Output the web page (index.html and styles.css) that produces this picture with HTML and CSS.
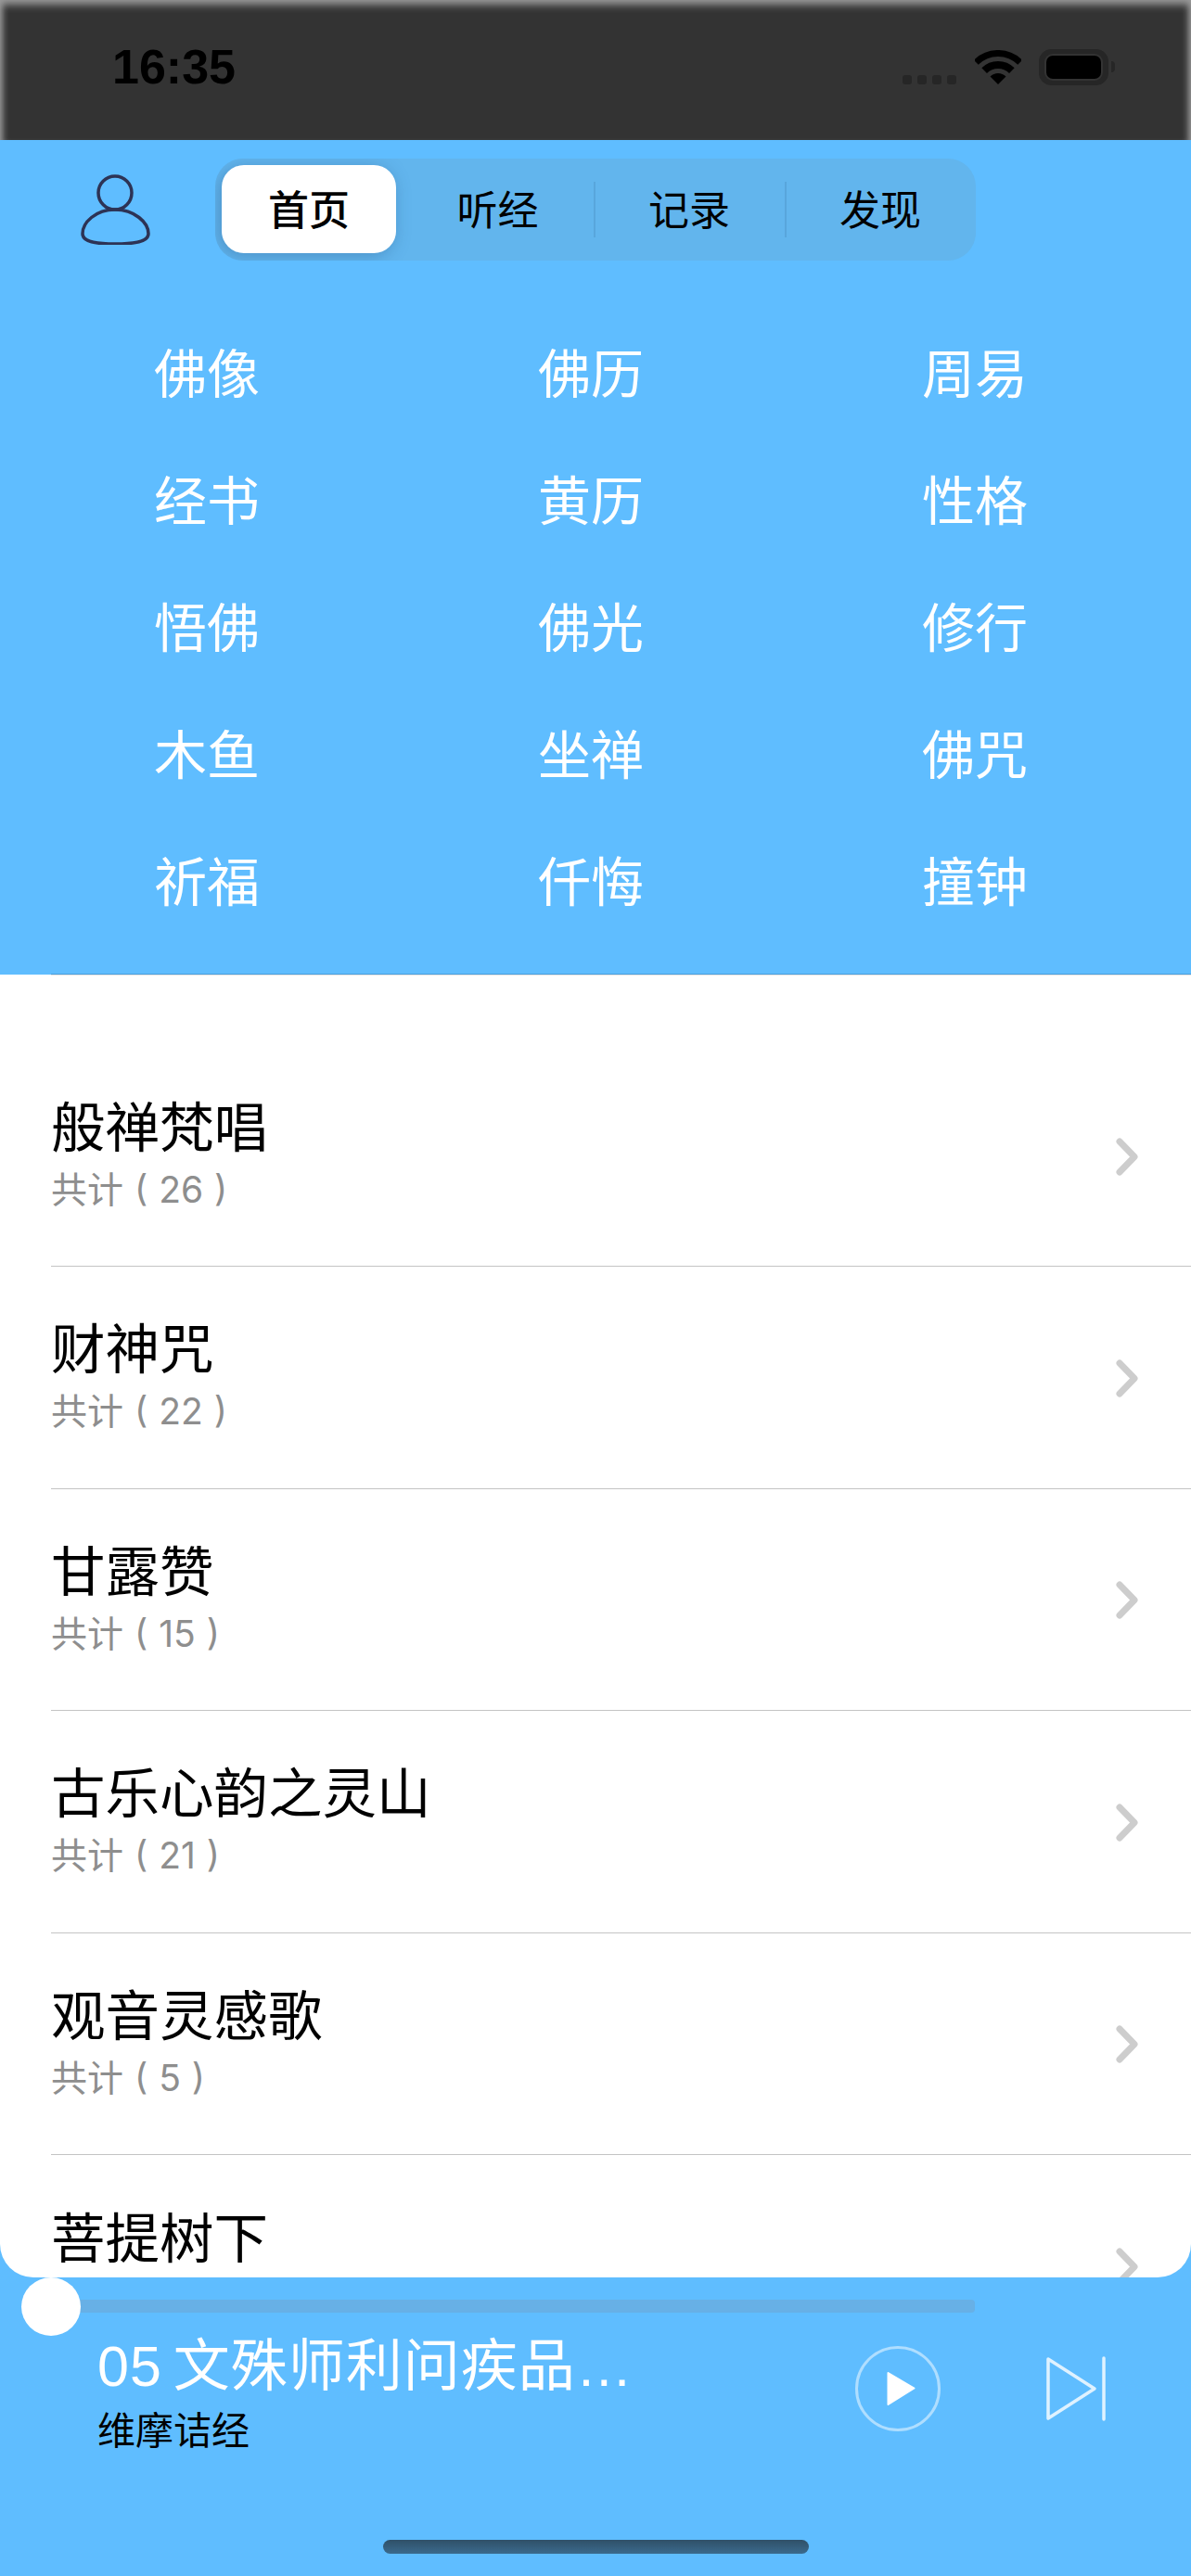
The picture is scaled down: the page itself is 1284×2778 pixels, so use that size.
FILE: index.html
```html
<!DOCTYPE html>
<html lang="zh">
<head>
<meta charset="utf-8">
<title>首页</title>
<link rel="stylesheet" href="styles.css">
</head>
<body>
<div class="phone">
  <header class="status">
    <span class="time">16:35</span>
    <div class="status-icons">
      <div class="signal"><i></i><i></i><i></i><i></i></div>
      <svg class="wifi" width="50" height="37" viewBox="0 0 50 37">
        <path d="M25 37 L16.5 28.5 A12 12 0 0 1 33.5 28.5 Z" fill="#000"/>
        <path d="M10.15 22.15 A21 21 0 0 1 39.85 22.15" fill="none" stroke="#000" stroke-width="8"/>
        <path d="M1.3 13.3 A33.5 33.5 0 0 1 48.7 13.3" fill="none" stroke="#000" stroke-width="7"/>
      </svg>
      <div class="battery"><div class="battery-fill"></div></div>
      <div class="battery-nub"></div>
    </div>
  </header>

  <section class="hero">
    <div class="topbar">
      <svg class="user" width="76" height="76" viewBox="0 0 76 76">
        <circle cx="37" cy="20" r="18" fill="none" stroke="#2d3355" stroke-width="3.5"/>
        <path d="M37 38 C16 38 2 52 2 64 C2 73 16 75 37 75 C58 75 73 73 73 64 C73 52 58 38 37 38 Z" fill="none" stroke="#2d3355" stroke-width="3.5"/>
      </svg>
      <nav class="seg">
        <a class="seg-item seg-active">首页</a>
        <a class="seg-item seg-second">听经</a>
        <a class="seg-item seg-rule">记录</a>
        <a class="seg-item seg-rule">发现</a>
      </nav>
    </div>
    <div class="grid">
      <a>佛像</a><a>佛历</a><a>周易</a>
      <a>经书</a><a>黄历</a><a>性格</a>
      <a>悟佛</a><a>佛光</a><a>修行</a>
      <a>木鱼</a><a>坐禅</a><a>佛咒</a>
      <a>祈福</a><a>仟悔</a><a>撞钟</a>
    </div>
    <div class="hero-rule"></div>
  </section>

  <main class="sheet">
    <div class="sheet-rule"></div>
    <div class="row">
      <div class="row-text"><div class="row-title">般禅梵唱</div><div class="row-sub">共计 ( 26 )</div></div>
      <svg class="chev" width="24" height="41" viewBox="0 0 24 41"><path d="M4 4 L20 20.5 L4 37"/></svg>
    </div>
    <div class="row">
      <div class="row-text"><div class="row-title">财神咒</div><div class="row-sub">共计 ( 22 )</div></div>
      <svg class="chev" width="24" height="41" viewBox="0 0 24 41"><path d="M4 4 L20 20.5 L4 37"/></svg>
    </div>
    <div class="row">
      <div class="row-text"><div class="row-title">甘露赞</div><div class="row-sub">共计 ( 15 )</div></div>
      <svg class="chev" width="24" height="41" viewBox="0 0 24 41"><path d="M4 4 L20 20.5 L4 37"/></svg>
    </div>
    <div class="row">
      <div class="row-text"><div class="row-title">古乐心韵之灵山</div><div class="row-sub">共计 ( 21 )</div></div>
      <svg class="chev" width="24" height="41" viewBox="0 0 24 41"><path d="M4 4 L20 20.5 L4 37"/></svg>
    </div>
    <div class="row">
      <div class="row-text"><div class="row-title">观音灵感歌</div><div class="row-sub">共计 ( 5 )</div></div>
      <svg class="chev" width="24" height="41" viewBox="0 0 24 41"><path d="M4 4 L20 20.5 L4 37"/></svg>
    </div>
    <div class="row row-cut">
      <div class="row-text"><div class="row-title">菩提树下</div></div>
      <svg class="chev" width="24" height="41" viewBox="0 0 24 41"><path d="M4 4 L20 20.5 L4 37"/></svg>
    </div>
  </main>

  <footer class="player">
    <div class="track"><div class="knob"></div></div>
    <div class="now">
      <div class="now-text">
        <div class="now-title">05 文殊师利问疾品…</div>
        <div class="now-sub">维摩诘经</div>
      </div>
      <svg class="play" width="92" height="92" viewBox="0 0 92 92">
        <circle cx="46" cy="46" r="44.5" fill="none" stroke="#fff" stroke-opacity="0.5" stroke-width="3"/>
        <path d="M35.5 29 L63.5 45.5 L35.5 63 Z" fill="#fff" stroke="#fff" stroke-width="2" stroke-linejoin="round"/>
      </svg>
      <svg class="next" width="66" height="70" viewBox="0 0 66 70">
        <path d="M2 3 L52 35 L2 67 Z" fill="none" stroke="#fff" stroke-opacity="0.8" stroke-width="3.5" stroke-linejoin="round"/>
        <path d="M62 2 V68" fill="none" stroke="#fff" stroke-opacity="0.8" stroke-width="3.5" stroke-linecap="round"/>
      </svg>
    </div>
    <div class="home-bar"></div>
  </footer>
</div>
</body>
</html>
```

FILE: styles.css
```css
* { box-sizing: border-box; }
html, body { margin: 0; padding: 0; }
body {
  background: #5fbdff;
  font-family: "Liberation Sans", "Noto Sans CJK SC", sans-serif;
}
.phone {
  width: 1284px;
  height: 2778px;
  display: flex;
  flex-direction: column;
  overflow: hidden;
  background: #5fbdff;
}

/* status bar */
.status {
  height: 151px;
  flex: none;
  background: #333;
  box-shadow: inset 0 10px 8px -5px #9a9a9a, inset 9px 0 7px -6px #9a9a9a, inset -9px 0 7px -6px #9a9a9a;
  display: flex;
  justify-content: space-between;
  align-items: flex-end;
  padding: 0 82px 59px 121px;
}
.time {
  font-size: 52px;
  line-height: 40px;
  font-weight: 700;
  color: #000;
}
.status-icons { display: flex; align-items: flex-end; }
.signal { display: flex; gap: 6px; margin-right: 20px; margin-bottom: 1px; }
.signal i { display: block; width: 10px; height: 10px; border-radius: 3px; background: #262626; }
.wifi { margin-right: 19px; margin-bottom: 1px; }
.battery {
  width: 75px;
  height: 39px;
  padding: 6px 7px;
  border-radius: 13px;
  border: 1px solid #262626;
  background: #262626;
}
.battery-fill { height: 100%; border-radius: 7px; background: #000; box-shadow: 0 0 0 2px #333; }
.battery-nub { width: 4px; height: 12px; margin: 0 0 14px 3px; border-radius: 0 6px 6px 0; background: #262626; }

/* blue header */
.hero { height: 900px; flex: none; padding-top: 20px; }
.topbar { display: flex; align-items: center; height: 110px; padding-left: 87px; }
.user { flex: none; margin-right: 69px; }
.seg {
  width: 820px;
  height: 110px;
  padding: 7px 0 8px 7px;
  display: flex;
  align-items: stretch;
  overflow: hidden;
  border-radius: 30px;
  background: #62b5ed;
}
.seg-item {
  display: flex;
  align-items: center;
  justify-content: center;
  position: relative;
  flex: none;
  width: 206px;
  padding-bottom: 4px;
  font-size: 44px;
  color: #000;
}
.seg-active {
  width: 188px;
  border-radius: 24px;
  background: #fff;
  box-shadow: -3px 3px 18px rgba(40, 90, 140, 0.4);
  font-weight: 500;
}
.seg-second { width: 213px; padding-left: 6px; }
.seg-rule::before {
  content: "";
  position: absolute;
  left: 0;
  top: 18px;
  bottom: 17px;
  width: 2px;
  background: #58a6dc;
}
.grid {
  margin: 49px 0 0 16px;
  width: 1242px;
  display: grid;
  grid-template-columns: repeat(3, 414px);
  grid-auto-rows: 137px;
}
.grid a {
  display: flex;
  align-items: center;
  justify-content: center;
  font-size: 57px;
  font-weight: 400;
  color: #fff;
}
.hero-rule { height: 1px; margin: 35px 0 0 55px; background: #4a9fdc; }

/* list sheet */
.sheet {
  height: 1405px;
  flex: none;
  overflow: hidden;
  background: #fff;
  border-radius: 0 0 36px 36px;
}
.sheet-rule { height: 1px; margin-left: 55px; background: #e4e4e4; }
.row {
  height: 239.5px;
  margin-left: 55px;
  padding-right: 57px;
  display: flex;
  align-items: center;
  justify-content: space-between;
  border-bottom: 1px solid #c4c4c4;
}
.sheet-rule + .row { height: 314px; padding-top: 75px; }
.row-cut { border-bottom: 0; }
.row-text { padding-bottom: 6px; }
.row-title { font-size: 58.5px; line-height: 78px; margin-bottom: 2px; color: #000; }
.row-sub { font-family: Inter, "Noto Sans CJK SC", sans-serif; font-size: 39px; font-weight: 400; line-height: 50px; word-spacing: 1px; color: #8e8e8e; }
.row-cut .row-text { height: 136px; }
.chev { flex: none; margin-top: 2px; }
.chev path { fill: none; stroke: #cdcdcd; stroke-width: 7; stroke-linecap: round; stroke-linejoin: round; }

/* player */
.player { flex: 1; position: relative; padding-top: 24px; }
.track {
  position: relative;
  height: 14px;
  margin: 0 233px 0 55px;
  border-radius: 0 4px 4px 0;
  background: #67b0e6;
}
.knob {
  position: absolute;
  left: -32px;
  top: -24px;
  width: 64px;
  height: 63px;
  border-radius: 50%;
  background: #fff;
}
.now { display: flex; align-items: flex-start; padding-left: 105px; margin-top: 25px; }
.now-text { width: 817px; flex: none; }
.now-title { font-size: 61px; line-height: 66px; letter-spacing: 1px; word-spacing: -6px; color: #fff; font-weight: 400; white-space: nowrap; }
.now-sub { font-size: 41px; line-height: 50px; margin-top: 12px; color: #000; }
.play { flex: none; margin-top: 11px; }
.next { flex: none; margin: 22px 0 0 114px; }
.home-bar {
  position: absolute;
  left: 413px;
  top: 283px;
  width: 459px;
  height: 15px;
  border-radius: 8px;
  background: linear-gradient(#2f5068, #3b6a8d);
}
```
